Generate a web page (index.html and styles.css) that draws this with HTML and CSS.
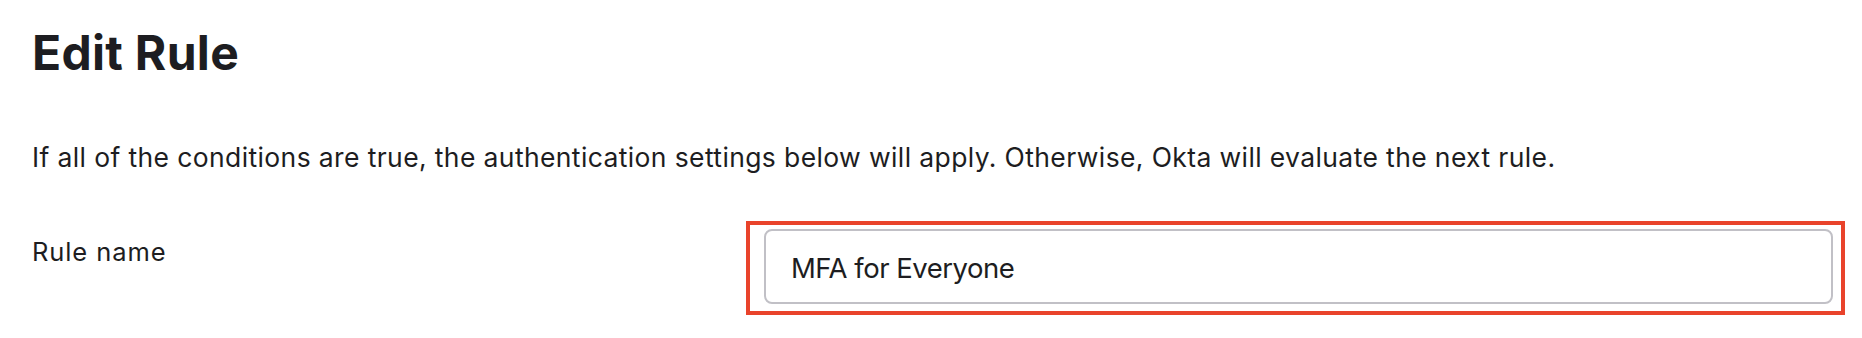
FILE: index.html
```html
<!DOCTYPE html>
<html lang="en">
<head>
<meta charset="utf-8">
<title>Edit Rule</title>
<link rel="stylesheet" href="styles.css">
</head>
<body>
<main class="page">
  <h1 class="title">Edit Rule</h1>
  <p class="intro">If all of the conditions are true, the authentication settings below will apply. Otherwise, Okta will evaluate the next rule.</p>
  <div class="field-row">
    <label class="field-label" for="rule-name">Rule name</label>
    <div class="highlight">
      <input class="text-input" id="rule-name" type="text" value="MFA for Everyone">
    </div>
  </div>
</main>
</body>
</html>
```
FILE: styles.css
```css
html, body {
  margin: 0;
  padding: 0;
  background: #ffffff;
}

body {
  font-family: "Inter", "Liberation Sans", sans-serif;
  color: #1d1d21;
}

.page {
  padding: 24px 17px 0 32px;
}

.title {
  margin: 0;
  font-size: 48px;
  line-height: 58px;
  font-weight: 700;
  letter-spacing: 0.3px;
}

.intro {
  margin: 57px 0 0 0;
  font-size: 26.5px;
  line-height: 36px;
  font-weight: 400;
  letter-spacing: 0.38px;
}

.field-row {
  display: flex;
  align-items: flex-start;
  margin-top: 46px;
}

.field-label {
  flex: 0 0 714px;
  padding-top: 15px;
  font-size: 25.5px;
  line-height: 32px;
  letter-spacing: 0.9px;
}

.highlight {
  flex: 1;
  border: 4px solid #e9432b;
  padding: 4px 8px 7px 14px;
}

.text-input {
  display: block;
  box-sizing: border-box;
  width: 100%;
  height: 75px;
  margin: 0;
  padding: 2px 25px 0 25px;
  border: 2px solid #c1c0c6;
  border-radius: 8px;
  background: #ffffff;
  font-family: "Inter", "Liberation Sans", sans-serif;
  font-size: 27.5px;
  letter-spacing: -0.5px;
  color: #1d1d21;
  outline: none;
}
```
